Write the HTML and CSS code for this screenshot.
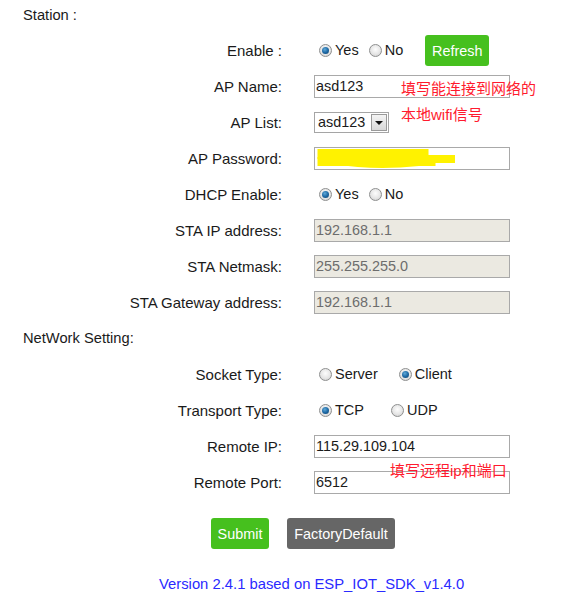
FILE: index.html
```html
<!DOCTYPE html>
<html>
<head>
<meta charset="utf-8">
<link rel="stylesheet" href="styles.css">
</head>
<body>
<div class="page">
  <div class="heading first">Station :</div>
  <div class="form">
    <div class="label">Enable :</div>
    <div class="value">
      <span class="opt"><span class="radio checked"></span>Yes</span>
      <span class="opt"><span class="radio"></span>No</span>
      <button class="btn green refresh">Refresh</button>
    </div>

    <div class="label">AP Name:</div>
    <div class="value anchor">
      <input class="field" type="text" value="asd123">
      <div class="note note-ap">填写能连接到网络的<br>本地wifi信号</div>
    </div>

    <div class="label">AP List:</div>
    <div class="value">
      <span class="select"><span class="select-text">asd123</span><span class="select-btn"><span class="tri"></span></span></span>
    </div>

    <div class="label">AP Password:</div>
    <div class="value anchor">
      <input class="field" type="text" value="">
      <svg class="scribble" width="150" height="24" viewBox="0 0 150 24">
        <rect x="3.5" y="2" width="111" height="10" fill="#fff200"/>
        <rect x="110" y="8" width="31" height="8" fill="#fff200"/>
        <rect x="3.5" y="10" width="118" height="9" fill="#fff200"/>
        <path d="M20 17 Q60 24 105 19 L110 17 Z" fill="#fff200"/>
      </svg>
    </div>

    <div class="label">DHCP Enable:</div>
    <div class="value">
      <span class="opt"><span class="radio checked"></span>Yes</span>
      <span class="opt"><span class="radio"></span>No</span>
    </div>

    <div class="label">STA IP address:</div>
    <div class="value"><input class="field disabled" type="text" value="192.168.1.1" disabled></div>

    <div class="label">STA Netmask:</div>
    <div class="value"><input class="field disabled" type="text" value="255.255.255.0" disabled></div>

    <div class="label">STA Gateway address:</div>
    <div class="value"><input class="field disabled" type="text" value="192.168.1.1" disabled></div>
  </div>

  <div class="heading">NetWork Setting:</div>
  <div class="form">
    <div class="label">Socket Type:</div>
    <div class="value">
      <span class="opt wide-server"><span class="radio"></span>Server</span>
      <span class="opt"><span class="radio checked"></span>Client</span>
    </div>

    <div class="label">Transport Type:</div>
    <div class="value">
      <span class="opt wide-tcp"><span class="radio checked"></span>TCP</span>
      <span class="opt"><span class="radio"></span>UDP</span>
    </div>

    <div class="label">Remote IP:</div>
    <div class="value"><input class="field" type="text" value="115.29.109.104"></div>

    <div class="label">Remote Port:</div>
    <div class="value anchor">
      <input class="field" type="text" value="6512">
      <div class="note note-port">填写远程ip和端口</div>
    </div>
  </div>

  <div class="actions">
    <button class="btn green">Submit</button>
    <button class="btn gray">FactoryDefault</button>
  </div>

  <div class="version">Version 2.4.1 based on ESP_IOT_SDK_v1.4.0</div>
</div>
</body>
</html>
```

FILE: styles.css
```css
* { box-sizing: border-box; }
html, body { margin: 0; padding: 0; background: #fff; }
body {
  font-family: "Liberation Sans", Arial, sans-serif;
  font-size: 15px;
  color: #1a1a1a;
}
.page { width: 584px; }
.heading {
  height: 36px;
  line-height: 36px;
  padding-left: 23px;
  font-size: 14.7px;
}
.heading.first {
  height: 32px;
  line-height: 30px;
}
.form {
  display: grid;
  grid-template-columns: 282px 1fr;
  grid-auto-rows: 36px;
  column-gap: 32px;
}
.label {
  display: flex;
  align-items: center;
  justify-content: flex-end;
  font-size: 15px;
}
.value {
  display: flex;
  align-items: center;
  font-size: 14.5px;
}
.anchor { position: relative; }
.field {
  width: 196px;
  height: 23px;
  border: 1px solid #a9a9a9;
  padding: 0 1px;
  font-family: "Liberation Sans", Arial, sans-serif;
  font-size: 14.4px;
  color: #1a1a1a;
  background: #fff;
  outline: none;
  margin: 0;
}
.field.disabled {
  background: #ebe9e1;
  color: #6d6d6d;
}
.opt {
  display: inline-flex;
  align-items: center;
  margin-left: 5px;
  margin-right: 5px;
}
.wide-server { margin-right: 16px; }
.wide-tcp { margin-right: 22px; }
.radio {
  width: 13px;
  height: 13px;
  border-radius: 50%;
  border: 1px solid #8e8f8f;
  background: radial-gradient(circle at 50% 40%, #fdfdfd 0%, #e6e6e6 55%, #c9c9c9 100%);
  margin-right: 3px;
  position: relative;
  display: inline-block;
  flex: none;
}
.radio.checked::after {
  content: "";
  position: absolute;
  left: 2px;
  top: 2px;
  width: 7px;
  height: 7px;
  border-radius: 50%;
  background: radial-gradient(circle at 40% 35%, #5fa9d8 0%, #1f6aa6 50%, #0e3f66 100%);
}
.btn {
  font-family: "Liberation Sans", Arial, sans-serif;
  font-size: 14.4px;
  color: #fff;
  border: none;
  border-radius: 3px;
  height: 31px;
  padding: 0;
  cursor: pointer;
  margin: 0;
}
.green { background: #46c01e; }
.gray { background: #666666; }
.refresh {
  margin-left: 17px;
  width: 64px;
  margin-top: 1px;
}
.select {
  display: inline-flex;
  align-items: center;
  width: 75px;
  height: 21px;
  border: 1px solid #a5a5a5;
  background: #fff;
}
.select-text {
  flex: 1;
  padding-left: 3px;
  font-size: 14.4px;
  color: #1a1a1a;
}
.select-btn {
  width: 16px;
  height: 17px;
  margin-right: 1px;
  border: 1px solid #9a9a9a;
  background: linear-gradient(#f4f4f4, #d8d8d8);
  display: flex;
  align-items: center;
  justify-content: center;
}
.tri {
  width: 0;
  height: 0;
  border-left: 4px solid transparent;
  border-right: 4px solid transparent;
  border-top: 4px solid #111;
  margin-top: 1px;
}
.note {
  position: absolute;
  color: #ff1a2e;
  font-family: "Liberation Sans", "Noto Sans CJK SC", sans-serif;
  font-size: 15px;
  line-height: 26px;
  white-space: nowrap;
}
.note-ap {
  left: 87px;
  top: 8px;
}
.note-port {
  left: 76px;
  top: -4px;
  line-height: 22px;
}
.scribble {
  position: absolute;
  left: 0;
  top: 7px;
}
.actions {
  display: flex;
  gap: 18px;
  padding-left: 211px;
  margin-top: 18px;
}
.actions .btn:first-child { width: 58px; }
.actions .btn:last-child { width: 108px; }
.version {
  margin-top: 24px;
  padding-left: 159px;
  color: #2a2aff;
  font-size: 14.8px;
  line-height: 22px;
}
```
